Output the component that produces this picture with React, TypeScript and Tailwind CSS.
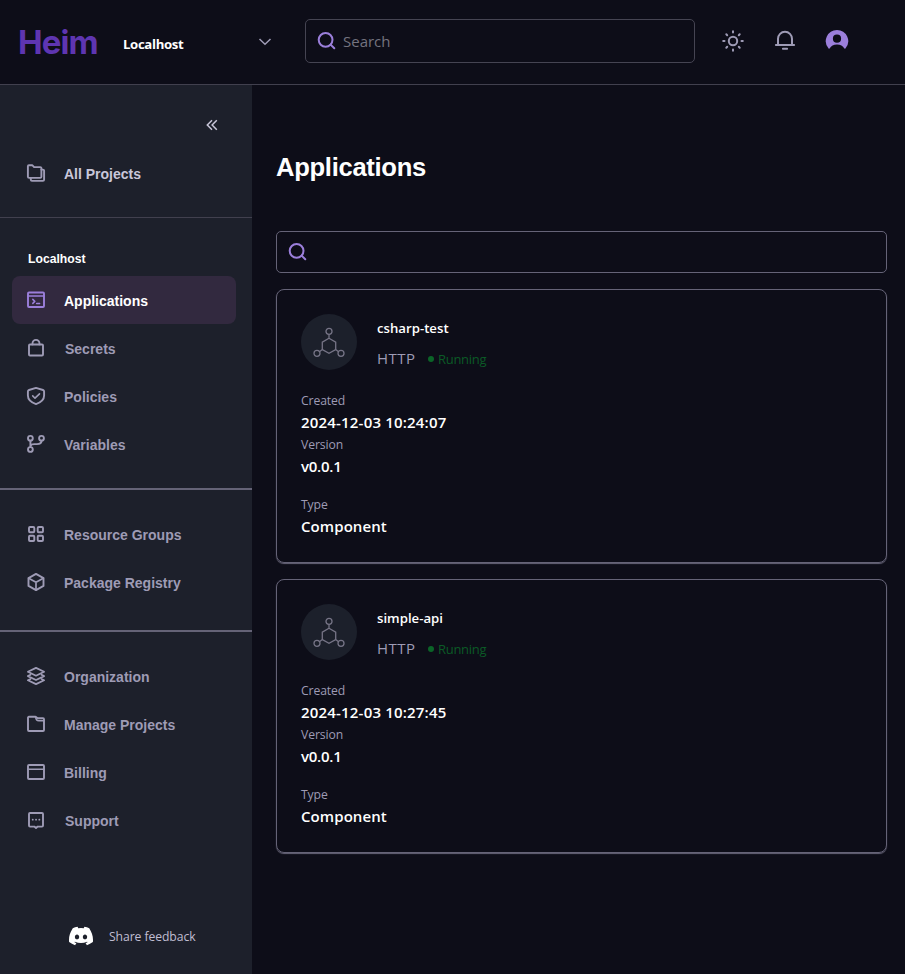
import type { ReactNode } from "react";

type IconProps = { children: ReactNode; className?: string; width?: number };

function Icon({ children, className = "text-[#9e9bb5]", width = 1.9 }: IconProps) {
  return (
    <svg
      viewBox="0 0 24 24"
      fill="none"
      stroke="currentColor"
      strokeWidth={width}
      strokeLinecap="round"
      strokeLinejoin="round"
      className={`size-6 shrink-0 ${className}`}
    >
      {children}
    </svg>
  );
}

const SearchIcon = () => (
  <Icon className="text-[#9b7fdb]" width={2}>
    <circle cx="10.6" cy="10.8" r="6.9" />
    <path d="M15.6 15.6 19.300 19.300" />
  </Icon>
);

const icons: Record<string, ReactNode> = {
  projects: (
    <>
      <path d="M3.9 5.2a1 1 0 0 1 1-1h3.300l1.900 1.900h6.100a1.200 1.200 0 0 1 1.200 1.200v8.400a1.200 1.200 0 0 1-1.200 1.200H5.100a1.200 1.200 0 0 1-1.200-1.200z" />
      <path d="M17.400 8.600h1.500a1.200 1.200 0 0 1 1.200 1.200v8.900a1.200 1.200 0 0 1-1.200 1.200H8a1.200 1.200 0 0 1-1.200-1.200V17" />
    </>
  ),
  applications: (
    <>
      <rect x="4" y="4.500" width="16" height="14.500" rx="1" />
      <path d="M4 8h16" strokeWidth="1.500" />
      <path d="m8.800 11.400 2 2-2 2M12.600 15.600h3" strokeWidth="1.500" />
    </>
  ),
  secrets: (
    <>
      <rect x="5" y="8.500" width="14" height="11" rx="1" />
      <path d="M8.500 8.400V7.400a3.500 3.500 0 0 1 7 0v1" />
    </>
  ),
  policies: (
    <>
      <path d="M12 3.900 19 6c.8.3 1.100.8 1.100 1.600v3.900c0 4.400-3.500 7-8.100 8.600-4.600-1.600-8.100-4.200-8.100-8.600V7.600c0-.8.3-1.300 1.100-1.600z" />
      <path d="m8.700 11.900 2.300 2.300 4.500-4.300" strokeWidth="1.600" />
    </>
  ),
  variables: (
    <>
      <circle cx="6.400" cy="6.300" r="2.400" />
      <circle cx="17.500" cy="6.300" r="2.400" />
      <circle cx="6.400" cy="17.500" r="2.400" />
      <path d="M6.400 8.700V15M17.500 8.700c0 2.700-2 3.400-4.600 3.400h-2.400c-2.400 0-4 .5-4.100 2.300" />
    </>
  ),
  resources: (
    <>
      <rect x="5" y="5" width="5.300" height="5.300" rx="1" />
      <rect x="13.700" y="5" width="5.300" height="5.300" rx="1" />
      <rect x="5" y="13.700" width="5.300" height="5.300" rx="1" />
      <rect x="13.700" y="13.700" width="5.300" height="5.300" rx="1" />
    </>
  ),
  registry: (
    <>
      <path d="m12 3.900 7.500 4.200v7.800L12 20.100l-7.500-4.200V8.100z" />
      <path d="m4.700 8.300 7.300 4 7.300-4M12 12.300v7.600" strokeWidth="1.700" />
    </>
  ),
  organization: (
    <g strokeWidth="1.800">
      <path d="m12 3.900 8.100 3.900-8.100 3.900-8.100-3.900z" />
      <path d="m6.500 10.700-2.600 1.400 8.100 3.900 8.100-3.900-2.600-1.400" />
      <path d="m6.500 15-2.600 1.300 8.100 3.800 8.100-3.800-2.600-1.300" />
    </g>
  ),
  manage: (
    <>
      <path d="M4 5.700a.9.9 0 0 1 .9-.9h6.600l2.300 1.500H19a1 1 0 0 1 1 1V18a1 1 0 0 1-1 1H5a1 1 0 0 1-1-1z" />
      <path d="M11.700 5c.2 2.700 1.200 3.800 3.100 3.800h5" strokeWidth="1.600" />
    </>
  ),
  billing: (
    <>
      <rect x="4" y="5" width="16" height="14" rx="1" />
      <path d="M4 9.300h16" strokeWidth="1.600" />
    </>
  ),
  support: (
    <>
      <path d="M6 5h12a1 1 0 0 1 1 1v11.600a1 1 0 0 1-1 1h-4.300L12 20l-1.700-1.400H6a1 1 0 0 1-1-1V6a1 1 0 0 1 1-1z" />
      <path d="M8.700 11.700h.1M12 11.700h.1M15.300 11.700h.1" strokeWidth="1.800" />
    </>
  ),
};

type Item = { icon: string; label: string; tone?: "active" | "bright"; indent?: boolean };

function NavItem({ icon, label, tone, indent }: Item) {
  const bg = tone === "active" ? "bg-[#32293f]" : "";
  const text =
    tone === "active" ? "text-white" : tone === "bright" ? "text-[#c9c7da]" : "text-[#9e9bb5]";
  return (
    <a className={`mx-3 mr-4 flex h-12 items-center gap-4 rounded-lg px-3 ${bg}`}>
      <Icon className={tone === "active" ? "text-[#9b7fdb]" : "text-[#9e9bb5]"}>{icons[icon]}</Icon>
      <span className={`pt-0.5 text-sm leading-5 font-bold ${indent ? "pl-px" : ""} ${text}`}>
        {label}
      </span>
    </a>
  );
}

const segoe = "font-['Open_Sans','Noto_Sans',sans-serif]";

function Header() {
  return (
    <header className="flex h-[85px] shrink-0 items-center border-b border-[#41404e]">
      <div className="w-[123px] pl-[18px] font-['Inter',sans-serif] text-[33px] leading-[82px] font-bold tracking-[-0.9px] text-[#5e35b1]">
        Heim
      </div>
      <div className="flex w-[182px] items-center justify-between pr-[32px]">
        <span className={`${segoe} pt-1.5 text-[13.200px] font-bold tracking-[-0.35px] text-white`}>Localhost</span>
        <svg viewBox="0 0 16 16" className="size-4 text-[#9e9bb5]" fill="none" stroke="currentColor" strokeWidth="1.500">
          <path d="m2.500 5 5.500 5.300L13.500 5" />
        </svg>
      </div>
      <div className="mt-[-3px] flex h-11 w-[390px] items-center gap-1 rounded-[5px] border border-[#454452] pl-[9px]">
        <SearchIcon />
        <span className={`${segoe} pt-0.5 text-[15px] text-[#74737f]`}>Search</span>
      </div>
      <div className="mt-[-3px] ml-[26px] flex items-center gap-7">
        <Icon width={2}>
          <circle cx="12" cy="12" r="4.200" />
          <path d="M12 2.200v1.300M12 20.500v1.300M2.200 12h1.300M20.500 12h1.300M5.300 5.300l.9.9M17.800 17.800l.9.9M5.300 18.700l.9-.9M17.800 6.200l.9-.9" />
        </Icon>
        <Icon width={2}>
          <path d="M5 15.500V9.800a7 7 0 0 1 14 0v5.700M2.900 15.900h18.200M9.900 19.700h4.200" />
        </Icon>
        <svg viewBox="0 0 24 24" className="size-6 text-[#9b7fdb]" fill="currentColor">
          <path
            fillRule="evenodd"
            d="M12 .9A11.200 11.200 0 0 0 3.600 19.500c.4.400 1 .300 1.200-.200C6 16.700 8.500 15.400 12 15.400s6 1.300 7.200 3.900c.2.500.8.600 1.200.2A11.200 11.200 0 0 0 12 .9Zm0 4.700a4.100 4.100 0 1 1 0 8.200 4.100 4.100 0 0 1 0-8.200Z"
          />
        </svg>
      </div>
    </header>
  );
}

function Sidebar() {
  return (
    <aside className="flex w-[252px] shrink-0 flex-col bg-[#1d202b] font-['Liberation_Sans',Arial,sans-serif]">
      <div className="flex h-16 items-end justify-end pr-8 pb-4">
        <svg viewBox="0 0 16 16" className="size-4 text-[#c9c7da]" fill="none" stroke="currentColor" strokeWidth="1.500">
          <path d="M8 3.300 3.300 8 8 12.700M12.800 3.300 8.100 8l4.700 4.700" />
        </svg>
      </div>
      <NavItem icon="projects" label="All Projects" tone="bright" />
      <div className="mt-5 h-px bg-[#41404e]" />
      <h2 className="mt-[33px] mb-[9px] pl-7 text-[12.200px] leading-4 font-bold text-white">Localhost</h2>
      <nav>
        <NavItem icon="applications" label="Applications" tone="active" />
        <NavItem icon="secrets" label="Secrets" indent />
        <NavItem icon="policies" label="Policies" />
        <NavItem icon="variables" label="Variables" />
      </nav>
      <div className="mt-5 mb-5 h-0.5 bg-[#656377]" />
      <nav>
        <NavItem icon="resources" label="Resource Groups" />
        <NavItem icon="registry" label="Package Registry" />
      </nav>
      <div className="mt-6 mb-5 h-0.5 bg-[#656377]" />
      <nav>
        <NavItem icon="organization" label="Organization" />
        <NavItem icon="manage" label="Manage Projects" />
        <NavItem icon="billing" label="Billing" />
        <NavItem icon="support" label="Support" indent />
      </nav>
      <div className="mt-auto mb-[26px] ml-[69px] flex items-center gap-4">
        <svg viewBox="0 0 24 24" className="size-6 text-white" fill="currentColor">
          <path d="M20.317 4.370a19.800 19.800 0 0 0-4.885-1.515.074.074 0 0 0-.079.037c-.210.375-.444.864-.608 1.250a18.300 18.300 0 0 0-5.487 0 12.600 12.600 0 0 0-.617-1.250.077.077 0 0 0-.079-.037A19.700 19.700 0 0 0 3.677 4.370a.07.07 0 0 0-.032.027C.533 9.046-.320 13.580.099 18.058a.082.082 0 0 0 .031.057 19.900 19.900 0 0 0 5.993 3.030.078.078 0 0 0 .084-.028c.462-.630.874-1.295 1.226-1.994a.076.076 0 0 0-.042-.106 13.100 13.100 0 0 1-1.872-.892.077.077 0 0 1-.008-.128l.372-.292a.074.074 0 0 1 .078-.010c3.928 1.793 8.180 1.793 12.062 0a.074.074 0 0 1 .079.009c.120.099.246.198.373.293a.077.077 0 0 1-.007.128 12.300 12.300 0 0 1-1.873.891.077.077 0 0 0-.041.107c.360.698.772 1.362 1.225 1.993a.076.076 0 0 0 .084.029 19.800 19.800 0 0 0 6.002-3.030.077.077 0 0 0 .032-.055c.500-5.177-.838-9.674-3.549-13.660a.061.061 0 0 0-.031-.029zM8.020 15.331c-1.183 0-2.157-1.086-2.157-2.419s.955-2.419 2.157-2.419c1.210 0 2.176 1.095 2.157 2.419 0 1.333-.955 2.419-2.157 2.419zm7.975 0c-1.183 0-2.157-1.086-2.157-2.419s.955-2.419 2.157-2.419c1.210 0 2.176 1.095 2.157 2.419 0 1.333-.946 2.419-2.157 2.419z" />
        </svg>
        <span className={`${segoe} pt-0.5 text-[12.200px] leading-5 tracking-[-0.08px] text-[#c0bed2]`}>Share feedback</span>
      </div>
    </aside>
  );
}

function Field({ label, value, spacing = "" }: { label: string; value: string; spacing?: string }) {
  return (
    <div>
      <dt className="pt-0.5 text-[12.200px] leading-5 font-medium tracking-[-0.1px] text-[#9e9bb5]">{label}</dt>
      <dd className={`text-[15px] leading-[22px] font-semibold text-white ${spacing}`}>{value}</dd>
    </div>
  );
}

function AppCard({ name, created }: { name: string; created: string }) {
  return (
    <article className={`${segoe} h-[274px] rounded-lg border border-[#656377] px-6 pt-6 shadow-[0_1px_1px_#656377]`}>
      <div className="flex h-14 gap-5">
        <div className="flex size-14 items-center justify-center rounded-full bg-[#1c202b]">
          <svg viewBox="0 0 32 32" className="size-8 text-[#767486]" fill="none" stroke="currentColor" strokeWidth="1.300">
            <path d="m16 12.300 6.700 3.800v7.400L16 27.300l-6.700-3.800v-7.400zM16 8.500v3.800M9.300 23.500l-2.500 2M22.700 23.500l2.500 2" />
            <circle cx="16" cy="5.300" r="3" />
            <circle cx="4" cy="27.300" r="3" />
            <circle cx="28" cy="27.300" r="3" />
          </svg>
        </div>
        <div>
          <h3 className="pt-1 text-[13.200px] leading-5 font-semibold text-white">{name}</h3>
          <div className="mt-[9px] flex items-center">
            <span className="w-[51px] text-[15px] leading-[22px] font-medium tracking-[0.5px] text-[#9e9bb5]">HTTP</span>
            <span className="mt-0.5 size-1.5 rounded-full bg-[#0b6428]" />
            <span className="ml-1 pt-0.5 text-[13px] leading-5 font-medium tracking-[-0.3px] text-[#0b5a26]">Running</span>
          </div>
        </div>
      </div>
      <dl className="pt-[19px]">
        <Field label="Created" value={created} spacing="tracking-[0.19px]" />
        <Field label="Version" value="v0.0.1" spacing="tracking-[-0.25px]" />
        <div className="pt-4">
          <Field label="Type" value="Component" spacing="tracking-[0.08px]" />
        </div>
      </dl>
    </article>
  );
}

export default function App() {
  return (
    <div className="flex h-[974px] w-[905px] flex-col overflow-hidden bg-[#0d0d18]">
      <Header />
      <div className="flex min-h-0 flex-1">
        <Sidebar />
        <main className="flex flex-1 flex-col pr-[18px] pl-6">
          <h1 className="mt-[66px] font-['Liberation_Sans',Arial,sans-serif] text-[25.600px] leading-8 font-bold tracking-[-0.3px] text-white">
            Applications
          </h1>
          <div className="mt-12 mb-4 flex h-[42px] items-center rounded-[5px] border border-[#656377] pl-[9px]">
            <SearchIcon />
          </div>
          <div className="flex flex-col gap-4">
            <AppCard name="csharp-test" created="2024-12-03 10:24:07" />
            <AppCard name="simple-api" created="2024-12-03 10:27:45" />
          </div>
        </main>
      </div>
    </div>
  );
}
